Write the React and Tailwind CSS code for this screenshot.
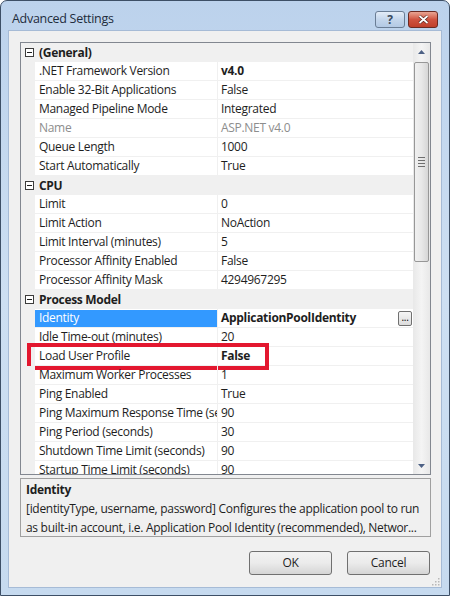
const rows = [
    { cat: "(General)" },
    { name: ".NET Framework Version", value: "v4.0", bold: true },
    { name: "Enable 32-Bit Applications", value: "False" },
    { name: "Managed Pipeline Mode", value: "Integrated" },
    { name: "Name", value: "ASP.NET v4.0", disabled: true },
    { name: "Queue Length", value: "1000" },
    { name: "Start Automatically", value: "True" },
    { cat: "CPU" },
    { name: "Limit", value: "0" },
    { name: "Limit Action", value: "NoAction" },
    { name: "Limit Interval (minutes)", value: "5" },
    { name: "Processor Affinity Enabled", value: "False" },
    { name: "Processor Affinity Mask", value: "4294967295" },
    { cat: "Process Model" },
    { name: "Identity", value: "ApplicationPoolIdentity", bold: true, selected: true, button: true },
    { name: "Idle Time-out (minutes)", value: "20" },
    { name: "Load User Profile", value: "False", bold: true, marked: true },
    { name: "Maximum Worker Processes", value: "1" },
    { name: "Ping Enabled", value: "True" },
    { name: "Ping Maximum Response Time (seconds)", value: "90" },
    { name: "Ping Period (seconds)", value: "30" },
    { name: "Shutdown Time Limit (seconds)", value: "90" },
    { name: "Startup Time Limit (seconds)", value: "90" },
];

const MinusBox = () => (
    <span className="w-[9px] h-[9px] border border-[#3c3c3c] bg-white flex items-center justify-center">
        <span className="w-[5px] h-[1px] bg-[#1e1e1e]" />
    </span>
);

const Row = ({ row }) => {

    if (row.cat) {
        return (
            <div className="h-[19px] flex items-center bg-[#f0f0f0] shrink-0">
                <div className="w-[14px] flex justify-center pl-[2px]">
                    <MinusBox />
                </div>
                <span className="pl-[4px] font-bold text-[#1e1e1e]">{row.cat}</span>
            </div>
        );
    }

    return (
        <div className="relative h-[19px] flex shrink-0">
            <div className="w-[14px] bg-[#f0f0f0]" />
            <div className="w-[182px] border-b border-[#f0f0f0] flex items-center">
                <div className={`w-full h-[17px] flex items-center pl-[4px] whitespace-nowrap overflow-hidden ${
                    row.selected ? "bg-[#3399ff] text-white" : row.disabled ? "text-[#8d8d8d]" : "text-[#1e1e1e]"
                }`}>
                    {row.name}
                </div>
            </div>
            <div className="flex-1 border-b border-l border-[#f0f0f0] flex items-center pl-[3px] pr-[1px] whitespace-nowrap overflow-hidden">
                <span className={`flex-1 ${row.bold ? "font-bold" : ""} ${row.disabled ? "text-[#8d8d8d]" : "text-[#1e1e1e]"}`}>
                    {row.value}
                </span>
                {row.button && (
                    <span className="w-[14px] h-[15px] border border-[#707070] rounded-[2px] bg-gradient-to-b from-[#f6f6f6] to-[#dcdcdc] text-[10px] leading-[10px] flex items-end justify-center pb-[3px]">
                        ...
                    </span>
                )}
            </div>
            {row.marked && (
                <div className="absolute left-[6px] top-[-4px] w-[242px] h-[27px] border-[4px] border-[#e3172f] pointer-events-none" />
            )}
        </div>
    );
};

const App = () => {

    return (
        <div
            className="w-[450px] h-[596px] bg-white overflow-hidden text-[12px] tracking-[-0.3px]"
            style={{ fontFamily: '"Segoe UI", "Open Sans", "Noto Sans", sans-serif' }}
        >
            <div className="w-full h-full rounded-t-[7px] border border-[#3d4f66] bg-gradient-to-b from-[#bcd2ec] via-[#cddff2] to-[#c6daef] flex flex-col">

                {/* Title bar */}
                <div className="h-[29px] flex items-start px-[11px] pt-[9px]">
                    <span className="flex-1 text-[#1e2c3c] text-[12.5px]">Advanced Settings</span>
                    <div className="flex gap-[3px] mt-[1px]">
                        <div className="w-[30px] h-[17px] rounded-[3px] border border-[#6a7d95] bg-gradient-to-b from-[#e3ecf7] via-[#c4d6ec] to-[#b3c9e4] flex items-center justify-center text-[#3a4a5e] text-[12px] font-bold leading-none">
                            ?
                        </div>
                        <div className="w-[30px] h-[17px] rounded-[3px] border border-[#6b2a22] bg-gradient-to-b from-[#e8a493] via-[#cf5340] to-[#c0402c] flex items-center justify-center">
                            <svg width="11" height="9" viewBox="0 0 11 9">
                                <path d="M1.5 1 L9.5 8 M9.5 1 L1.5 8" stroke="#4a1a14" strokeWidth="3" />
                                <path d="M1.5 1 L9.5 8 M9.5 1 L1.5 8" stroke="#ffffff" strokeWidth="1.8" />
                            </svg>
                        </div>
                    </div>
                </div>

                {/* Client area */}
                <div className="flex-1 mx-[7px] mb-[7px] border border-[#a6bbd6] bg-[#f0f0f0] flex flex-col pl-[11px] pr-[10px] pt-[11px] relative">

                    {/* Property grid */}
                    <div className="h-[433px] border border-[#828790] bg-white flex overflow-hidden">
                        <div className="flex-1 flex flex-col overflow-hidden">
                            {rows.map((row, i) => (
                                <Row key={i} row={row} />
                            ))}
                        </div>

                        {/* Scrollbar */}
                        <div className="w-[17px] bg-gradient-to-r from-[#e8e8e8] via-[#f4f4f4] to-[#e8e8e8] flex flex-col items-center">
                            <div className="h-[17px] flex items-center justify-center">
                                <svg width="7" height="4" viewBox="0 0 7 4">
                                    <path d="M0 4 L3.5 0 L7 4 Z" fill="#4d6185" />
                                </svg>
                            </div>
                            <div className="w-[15px] h-[200px] mt-[2px] rounded-[2px] border border-[#979797] bg-gradient-to-r from-[#f0f0f0] via-[#e8e8e8] to-[#d6d6d6] flex flex-col items-center justify-center gap-[2px]">
                                <span className="w-[7px] h-[1px] bg-[#6e6e6e]" />
                                <span className="w-[7px] h-[1px] bg-[#6e6e6e]" />
                                <span className="w-[7px] h-[1px] bg-[#6e6e6e]" />
                                <span className="w-[7px] h-[1px] bg-[#6e6e6e]" />
                            </div>
                            <div className="flex-1" />
                            <div className="h-[17px] flex items-center justify-center">
                                <svg width="7" height="4" viewBox="0 0 7 4">
                                    <path d="M0 0 L3.5 4 L7 0 Z" fill="#4d6185" />
                                </svg>
                            </div>
                        </div>
                    </div>

                    {/* Description */}
                    <div className="h-[59px] mt-[3px] border border-[#a0a0a0] bg-[#f0f0f0] px-[5px] pt-[1px] text-[#1e1e1e] leading-[19px]">
                        <div className="font-bold">Identity</div>
                        <div className="whitespace-nowrap">[identityType, username, password] Configures the application pool to run</div>
                        <div className="whitespace-nowrap">as built-in account, i.e. Application Pool Identity (recommended), Networ...</div>
                    </div>

                    {/* Buttons */}
                    <div className="flex justify-end gap-[15px] mt-[14px] pr-[1px]">
                        <button className="w-[83px] h-[24px] rounded-[3px] border border-[#707070] bg-gradient-to-b from-[#f2f2f2] via-[#ebebeb] to-[#d5d5d5] text-[#1e1e1e]">
                            OK
                        </button>
                        <button className="w-[83px] h-[24px] rounded-[3px] border border-[#707070] bg-gradient-to-b from-[#f2f2f2] via-[#ebebeb] to-[#d5d5d5] text-[#1e1e1e]">
                            Cancel
                        </button>
                    </div>

                    {/* Resize grip */}
                    <svg className="absolute right-[1px] bottom-[1px]" width="10" height="10" viewBox="0 0 10 10">
                        <g fill="#b8b8b8">
                            <rect x="8" y="2" width="1.5" height="1.5" />
                            <rect x="5" y="5" width="1.5" height="1.5" />
                            <rect x="8" y="5" width="1.5" height="1.5" />
                            <rect x="2" y="8" width="1.5" height="1.5" />
                            <rect x="5" y="8" width="1.5" height="1.5" />
                            <rect x="8" y="8" width="1.5" height="1.5" />
                        </g>
                    </svg>
                </div>
            </div>
        </div>
    );
};

export default App;
